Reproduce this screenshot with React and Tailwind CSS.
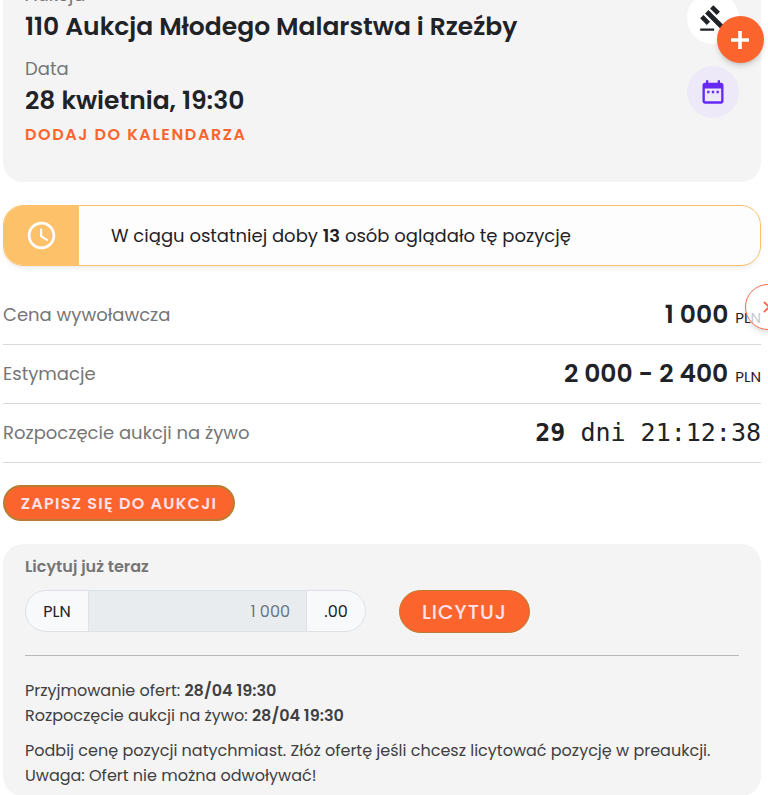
import { MdAccessTime, MdDateRange, MdGavel } from "react-icons/md";

function Detail({ label, value, icon, iconClass, children }) {
  return (
    <div className="flex justify-between">
      <div>
        <p className="text-lg leading-7 text-[#757575]">{label}</p>
        <h2 className="text-[25px] leading-9 font-semibold">{value}</h2>
        {children}
      </div>
      <div className={`mt-[11px] flex size-13 shrink-0 items-center justify-center rounded-full ${iconClass}`}>
        {icon}
      </div>
    </div>
  );
}

function PriceRow({ label, children }) {
  return (
    <div className="flex h-[59px] items-center justify-between border-b border-[#d5dbda]">
      <dt className="text-lg text-[#757575]">{label}</dt>
      <dd className="text-[25px] leading-9">{children}</dd>
    </div>
  );
}

function Amount({ children }) {
  return (
    <span className="block pt-0.5">
      <strong className="font-semibold">{children}</strong>
      <span className="ml-[7px] text-[15px]">PLN</span>
    </span>
  );
}

export default function App() {
  return (
    <main className="relative overflow-hidden bg-white pr-[7px] pl-[3px] font-['Poppins','Inter',sans-serif] text-[#1f2226]">
      <section className="-mt-10 rounded-[20px] bg-[#f4f4f4] px-[22px] pt-[21px] pb-[35px]">
        <Detail
          label="Aukcja"
          value="110 Aukcja Młodego Malarstwa i Rzeźby"
          icon={<MdGavel size={28} />}
          iconClass="bg-white"
        />
        <div className="mt-[10px]">
          <Detail
            label="Data"
            value="28 kwietnia, 19:30"
            icon={<MdDateRange size={28} />}
            iconClass="bg-[#eee9f8] text-[#6528f7]"
          >
            <a href="#kalendarz" className="mt-1 block text-[16px] leading-6 font-semibold tracking-widest text-[#fb642d]">
              DODAJ DO KALENDARZA
            </a>
          </Detail>
        </div>
      </section>

      <section className="mt-[23px] flex h-[61px] overflow-hidden rounded-[20px] border border-[#fdc16a] bg-[#fdfdfd] shadow-md shadow-black/5">
        <div className="flex w-[75px] shrink-0 items-center justify-center bg-[#fdc16a] text-white">
          <MdAccessTime size={33} />
        </div>
        <p className="flex-1 self-center pl-8 text-lg">
          W ciągu ostatniej doby <strong className="font-semibold">13</strong> osób oglądało tę pozycję
        </p>
      </section>

      <dl className="mt-5">
        <PriceRow label="Cena wywoławcza">
          <Amount>1 000</Amount>
        </PriceRow>
        <PriceRow label="Estymacje">
          <Amount>2 000 - 2 400</Amount>
        </PriceRow>
        <PriceRow label="Rozpoczęcie aukcji na żywo">
          <span className="font-['DejaVu_Sans_Mono',monospace]">
            <strong>29</strong> dni 21:12:38
          </span>
        </PriceRow>
      </dl>

      <button
        type="button"
        className="mt-[22px] block h-9 w-[232px] rounded-full border-2 border-[#b97c31] bg-[#fb642d] pt-px text-[16px] font-semibold tracking-[0.08em] text-[#ffe1ea]"
      >
        ZAPISZ SIĘ DO AUKCJI
      </button>

      <section className="mt-[23px] rounded-[20px] bg-[#f4f4f4] px-[22px] pt-[10px] pb-2 text-[16px] leading-[25px] text-[#3f4042]">
        <label htmlFor="bid" className="block font-semibold text-[#757575]">
          Licytuj już teraz
        </label>
        <div className="mt-[11px] flex items-start gap-[33px]">
          <div className="flex h-[42px] w-[341px] overflow-hidden rounded-full border border-[#dee2e6] bg-[#f8f9fb] text-[#1f2226]">
            <span className="flex w-[62px] shrink-0 items-center justify-center">PLN</span>
            <input
              id="bid"
              readOnly
              defaultValue="1 000"
              className="min-w-0 flex-1 border-x border-[#dee2e6] bg-[#e9ecef] px-4 text-right text-[#6c757d] outline-none"
            />
            <span className="flex w-[58px] shrink-0 items-center justify-center">.00</span>
          </div>
          <button
            type="button"
            className="h-[43px] w-[131px] rounded-full border border-[#b97c31] bg-[#fb642d] pt-px text-xl font-medium tracking-wider text-[#ffe1ea]"
          >
            LICYTUJ
          </button>
        </div>
        <hr className="mt-[22px] border-[#b9b9b9]" />
        <p className="mt-[22px]">
          Przyjmowanie ofert: <strong className="font-semibold">28/04 19:30</strong>
          <br />
          Rozpoczęcie aukcji na żywo: <strong className="font-semibold">28/04 19:30</strong>
        </p>
        <p className="mt-[10px]">
          Podbij cenę pozycji natychmiast. Złóż ofertę jeśli chcesz licytować pozycję w preaukcji.
          <br />
          Uwaga: Ofert nie można odwoływać!
        </p>
      </section>

      <button
        type="button"
        aria-label="Dodaj"
        className="absolute top-4 right-1 flex size-[47px] items-center justify-center rounded-full bg-[#fb642d] pr-0.5 text-white shadow-md shadow-black/15"
      >
        <svg width="18" height="18" viewBox="0 0 18 18" fill="none" stroke="currentColor" strokeWidth="3.6">
          <path d="M9 0v18M0 9h18" />
        </svg>
      </button>
      <button
        type="button"
        aria-label="Zamknij"
        className="absolute top-[284px] -right-[23px] flex size-[46px] items-center justify-center rounded-full border border-[#f4694a] bg-white/75 pl-0.5 text-[#f4694a] shadow-md shadow-black/10"
      >
        <svg width="12" height="12" viewBox="0 0 12 12" fill="none" stroke="currentColor" strokeWidth="1.8">
          <path d="M1 1l10 10M11 1L1 11" />
        </svg>
      </button>
    </main>
  );
}
